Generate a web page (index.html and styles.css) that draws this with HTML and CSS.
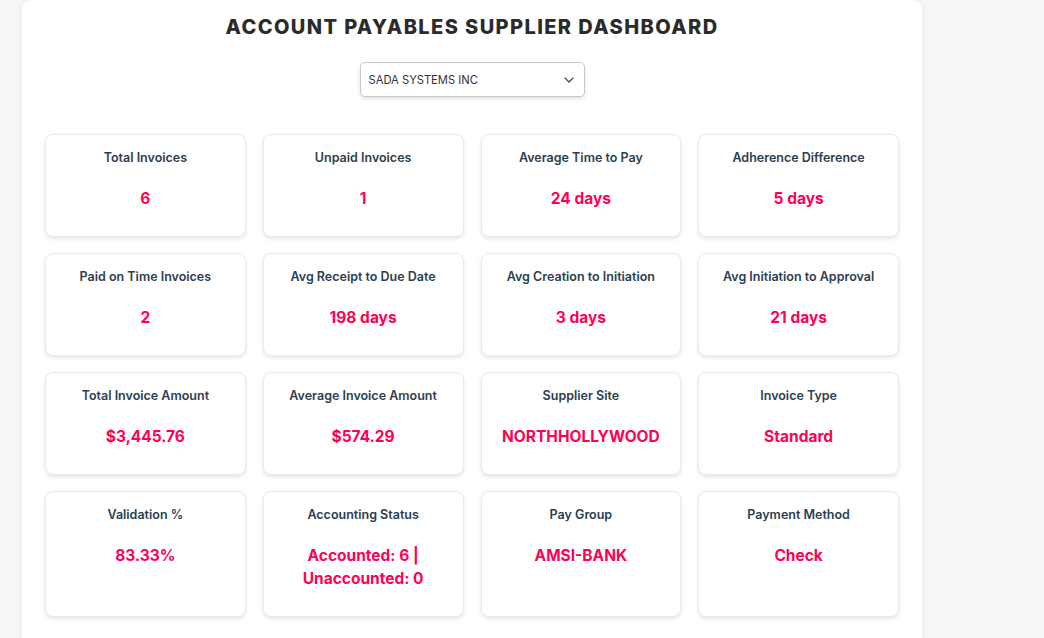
FILE: index.html
```html
<!DOCTYPE html>
<html lang="en">
<head>
<meta charset="utf-8">
<title>Account Payables Supplier Dashboard</title>
<link rel="stylesheet" href="styles.css">
</head>
<body>
<div class="page">
  <main class="panel">
    <h1 class="title">ACCOUNT PAYABLES SUPPLIER DASHBOARD</h1>
    <div class="picker">
      <div class="select">
        <span class="select-text">SADA SYSTEMS INC</span>
        <svg class="chev" width="10" height="6" viewBox="0 0 10 6"><path d="M1 1l4 4 4-4" fill="none" stroke="#444" stroke-width="1.2" stroke-linecap="round" stroke-linejoin="round"/></svg>
      </div>
    </div>
    <section class="grid">
      <div class="card"><div class="label">Total Invoices</div><div class="value">6</div></div>
      <div class="card"><div class="label">Unpaid Invoices</div><div class="value">1</div></div>
      <div class="card"><div class="label">Average Time to Pay</div><div class="value">24 days</div></div>
      <div class="card"><div class="label">Adherence Difference</div><div class="value">5 days</div></div>

      <div class="card"><div class="label">Paid on Time Invoices</div><div class="value">2</div></div>
      <div class="card"><div class="label">Avg Receipt to Due Date</div><div class="value">198 days</div></div>
      <div class="card"><div class="label">Avg Creation to Initiation</div><div class="value">3 days</div></div>
      <div class="card"><div class="label">Avg Initiation to Approval</div><div class="value">21 days</div></div>

      <div class="card"><div class="label">Total Invoice Amount</div><div class="value">$3,445.76</div></div>
      <div class="card"><div class="label">Average Invoice Amount</div><div class="value">$574.29</div></div>
      <div class="card"><div class="label">Supplier Site</div><div class="value">NORTHHOLLYWOOD</div></div>
      <div class="card"><div class="label">Invoice Type</div><div class="value">Standard</div></div>

      <div class="card"><div class="label">Validation %</div><div class="value">83.33%</div></div>
      <div class="card"><div class="label">Accounting Status</div><div class="value">Accounted: 6 |<br>Unaccounted: 0</div></div>
      <div class="card"><div class="label">Pay Group</div><div class="value">AMSI-BANK</div></div>
      <div class="card"><div class="label">Payment Method</div><div class="value">Check</div></div>
    </section>
  </main>
</div>
</body>
</html>
```
FILE: styles.css
```css
html, body {
  margin: 0;
  padding: 0;
  background: #f6f7f9;
  font-family: "Inter", "Open Sans", sans-serif;
  height: 100%;
  overflow: hidden;
}

.page {
  display: flex;
  padding-left: 22px;
}

.panel {
  width: 900px;
  box-sizing: border-box;
  background: #ffffff;
  border-top-right-radius: 10px;
  border-top-left-radius: 10px;
  box-shadow: 0 0 8px rgba(0, 0, 0, 0.06);
  padding: 12px 23px 40px;
  min-height: 700px;
}

.title {
  margin: 0;
  text-align: center;
  font-size: 20px;
  line-height: 30px;
  font-weight: 800;
  letter-spacing: 1.4px;
  color: #2b2b2b;
}

.picker {
  display: flex;
  justify-content: center;
  margin-top: 20px;
}

.select {
  width: 225px;
  height: 35px;
  box-sizing: border-box;
  border: 1px solid #c9c9c9;
  border-radius: 5px;
  box-shadow: 0 2px 4px rgba(0, 0, 0, 0.12);
  display: flex;
  align-items: center;
  justify-content: space-between;
  padding: 0 10px 0 8px;
  background: #fff;
}

.select-text {
  font-size: 11.2px;
  color: #333;
}

.grid {
  margin-top: 37px;
  display: grid;
  grid-template-columns: repeat(4, 1fr);
  gap: 16.5px 17px;
}

.card {
  border: 1px solid #e4ecee;
  border-radius: 8px;
  box-shadow: 0 2px 4px rgba(0, 0, 0, 0.1);
  padding: 13px 10px 25.5px;
  text-align: center;
  background: #fff;
}

.label {
  font-size: 12.5px;
  line-height: 20px;
  font-weight: 600;
  color: #2c3e50;
}

.value {
  margin-top: 19px;
  font-size: 15.5px;
  line-height: 23px;
  font-weight: 700;
  color: #ff0055;
}
```
